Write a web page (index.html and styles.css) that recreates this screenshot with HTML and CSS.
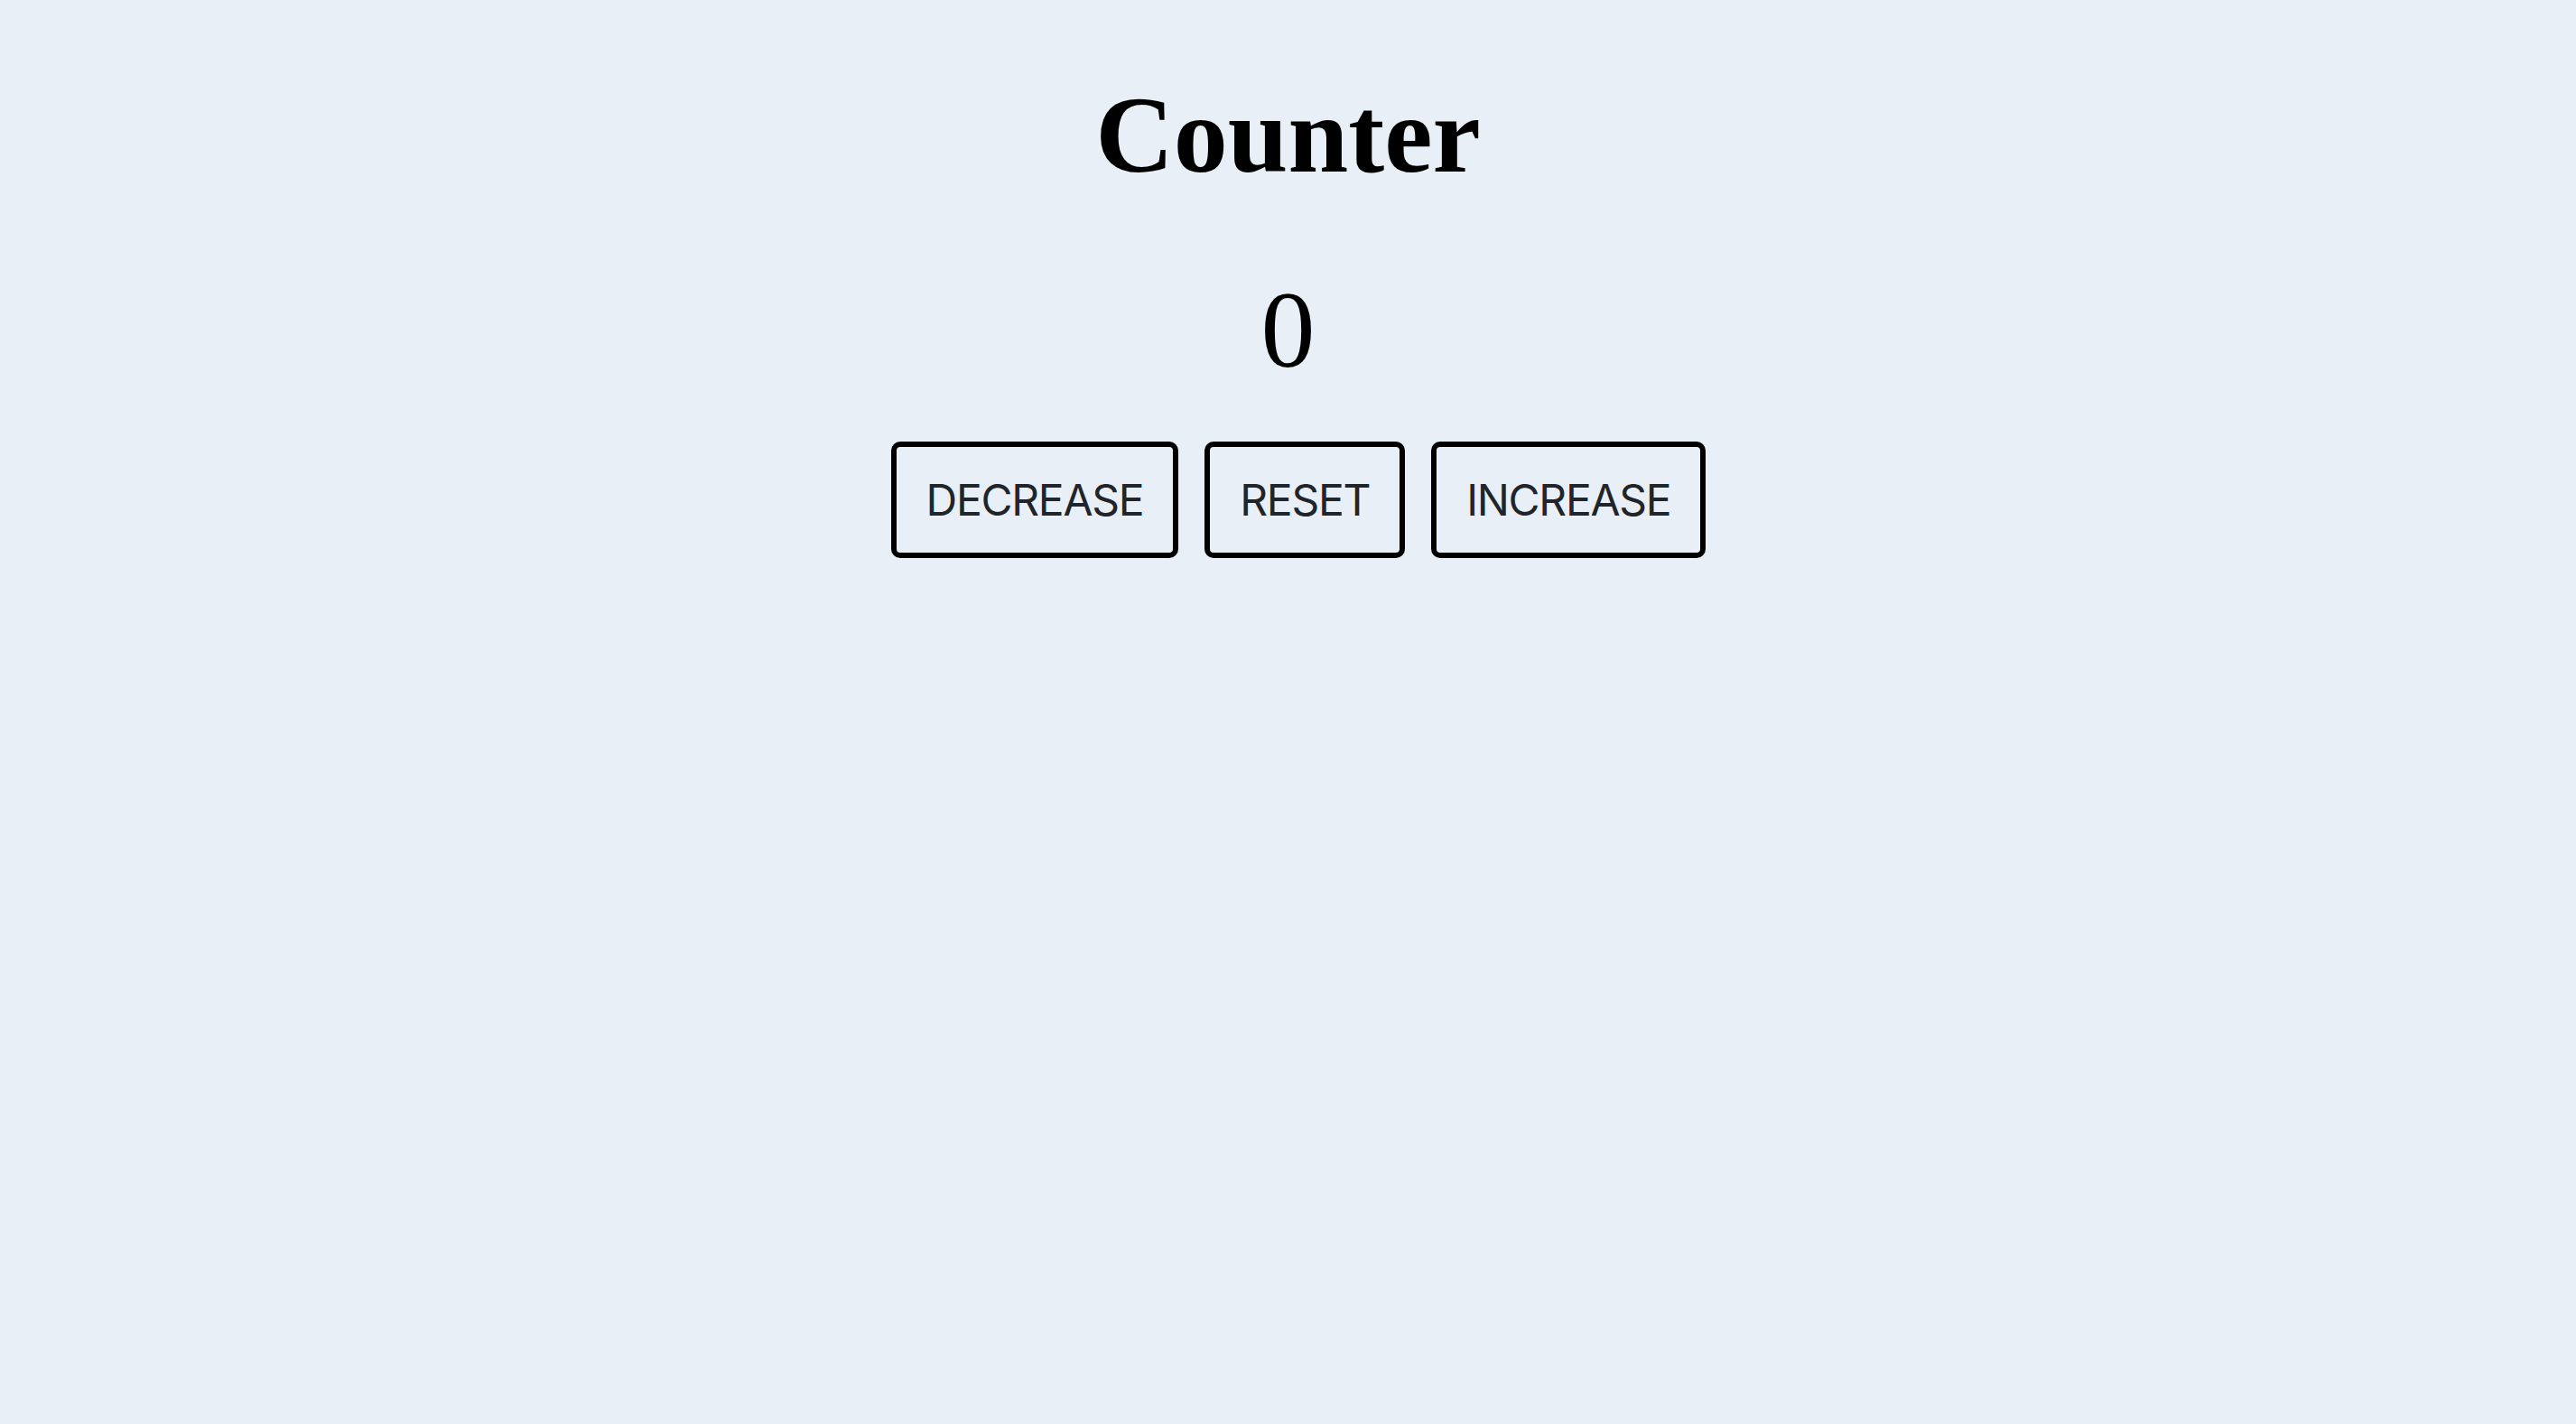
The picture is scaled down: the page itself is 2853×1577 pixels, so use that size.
FILE: index.html
```html
<!DOCTYPE html>
<html lang="en">
<head>
<meta charset="utf-8">
<title>Counter</title>
<link rel="stylesheet" href="styles.css">
</head>
<body>
<main class="app">
  <h1 class="title">Counter</h1>
  <div class="value">0</div>
  <div class="controls">
    <button class="btn">DECREASE</button>
    <button class="btn">RESET</button>
    <button class="btn">INCREASE</button>
  </div>
</main>
</body>
</html>
```

FILE: styles.css
```css
html, body {
  margin: 0;
  padding: 0;
  height: 100%;
}
body {
  background: #e8eff6;
  font-family: "Liberation Serif", "Times New Roman", serif;
  color: #000;
}
.app {
  display: flex;
  flex-direction: column;
  align-items: center;
  padding-top: 90px;
}
.title {
  margin: 0;
  font-size: 120px;
  line-height: 1;
  font-weight: bold;
}
.value {
  margin-top: 96px;
  font-size: 120px;
  line-height: 1;
}
.controls {
  display: flex;
  gap: 29px;
  margin-top: 63px;
  padding-left: 23px;
}
.btn {
  box-sizing: border-box;
  height: 129px;
  padding: 0 33px;
  border: 6px solid #000;
  border-radius: 10px;
  background: transparent;
  font-family: "Inter", "Liberation Sans", sans-serif;
  font-size: 48px;
  letter-spacing: -1.3px;
  color: #212529;
  display: flex;
  align-items: center;
  justify-content: center;
}
```
